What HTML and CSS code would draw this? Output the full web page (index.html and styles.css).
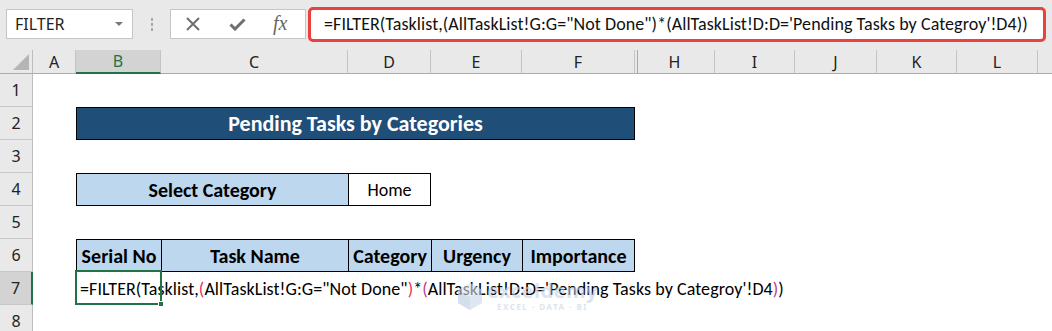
FILE: index.html
```html
<!DOCTYPE html>
<html>
<head>
<meta charset="utf-8">
<link rel="stylesheet" href="styles.css">
</head>
<body>
<div class="toolbar">
  <div class="namebox"><span>FILTER</span><span class="caret"></span></div>
  <div class="grip"><i></i><i></i><i></i></div>
  <div class="fbtns">
    <svg class="ic-x" width="14" height="14" viewBox="0 0 14 14"><path d="M1 1 L13 13 M13 1 L1 13" stroke="#6f6f6f" stroke-width="2" fill="none"/></svg>
    <svg class="ic-check" width="17" height="13" viewBox="0 0 17 13"><path d="M1.5 6.5 L6 11 L15.5 1.5" stroke="#6f6f6f" stroke-width="3" fill="none"/></svg>
    <span class="fx">fx</span>
  </div>
  <div class="formula">=FILTER(Tasklist,(AllTaskList!G:G="Not Done")*(AllTaskList!D:D='Pending Tasks by Categroy'!D4))</div>
</div>
<div class="sheet">
  <div class="corner"><span class="tri"></span></div>
  <div class="ch">A</div>
  <div class="ch sel">B</div>
  <div class="ch">C</div>
  <div class="ch">D</div>
  <div class="ch">E</div>
  <div class="ch">F</div>
  <div class="ch hid">H</div>
  <div class="ch">I</div>
  <div class="ch">J</div>
  <div class="ch">K</div>
  <div class="ch">L</div>
  <div class="ch last"></div>

  <div class="rh">1</div>

  <div class="rh">2</div>
  <div class="title">Pending Tasks by Categories</div>

  <div class="rh">3</div>

  <div class="rh">4</div>
  <div class="select-row">
    <div class="cell head">Select Category</div>
    <div class="cell">Home</div>
  </div>

  <div class="rh">5</div>

  <div class="rh">6</div>
  <div class="table-head">
    <div class="cell head">Serial No</div>
    <div class="cell head">Task Name</div>
    <div class="cell head">Category</div>
    <div class="cell head">Urgency</div>
    <div class="cell head">Importance</div>
  </div>

  <div class="rh sel">7</div>
  <div class="edit-row">
    <span class="edit-text">=FILTER(Tasklist,<span class="p1">(</span>AllTaskList!G:G="Not Done"<span class="p1">)</span>*<span class="p2">(</span>AllTaskList!D:D='Pending Tasks by Categroy'!D4<span class="p2">)</span>)</span>
    <span class="selbox"><span class="handle"></span></span>
    <div class="watermark">
      <svg width="30" height="30" viewBox="0 0 30 30"><path d="M15 2 L27 9 L27 22 L15 29 L3 22 L3 9 Z" fill="#c9d6ea"/><path d="M15 2 L27 9 L15 16 L3 9 Z" fill="#dbe4f2"/><path d="M15 16 L15 29 L3 22 L3 9 Z" fill="#b9c9e2"/></svg>
      <div class="wm-text">
        <span class="wm-name">exceldemy</span>
        <span class="wm-sub">EXCEL · DATA · BI</span>
      </div>
    </div>
  </div>

  <div class="rh">8</div>
</div>
</body>
</html>
```

FILE: styles.css
```css
* { box-sizing: border-box; }
html, body { margin: 0; padding: 0; }
body {
  width: 1052px;
  height: 331px;
  overflow: hidden;
  background: #fff;
  font-family: "Noto Sans", sans-serif;
}

/* ---------- formula toolbar ---------- */
.toolbar {
  height: 50px;
  background: #e9e9e9;
  display: flex;
  align-items: center;
  padding: 0 6px 2px 6px;
}
.namebox {
  width: 127px;
  height: 30px;
  background: #fff;
  border: 1px solid #c6c6c6;
  display: flex;
  align-items: center;
  justify-content: space-between;
  padding: 0 9px 0 8px;
  font-size: 16px;
  color: #222;
}
.caret {
  width: 0;
  height: 0;
  border-left: 4px solid transparent;
  border-right: 4px solid transparent;
  border-top: 4px solid #7a7a7a;
}
.grip {
  width: 37px;
  display: flex;
  flex-direction: column;
  align-items: center;
  gap: 2px;
}
.grip i {
  display: block;
  width: 2px;
  height: 3px;
  background: #a8a8a8;
}
.fbtns {
  width: 136px;
  height: 30px;
  background: #fff;
  border: 1px solid #c6c6c6;
  display: flex;
  align-items: center;
  padding-left: 15px;
}
.ic-check { margin-left: 29px; }
.fx {
  margin-left: 27px;
  font-family: "Liberation Serif", serif;
  font-style: italic;
  font-size: 20px;
  color: #666;
  line-height: 1;
  margin-top: -2px;
}
.formula {
  flex: 1;
  margin-left: 2px;
  height: 35px;
  border: 3px solid #e8413e;
  border-radius: 5px;
  background: #fff;
  padding-left: 13px;
  display: flex;
  align-items: center;
  font-family: Carlito, Calibri, Lato, sans-serif;
  font-size: 18px;
  letter-spacing: 0.07px;
  color: #111;
  white-space: nowrap;
  overflow: hidden;
}

/* ---------- sheet grid ---------- */
.sheet {
  display: grid;
  grid-template-columns: 33px 43px 85px 187px 83px 91px 113px 80px 80px 82px 80px 81px 1fr;
  grid-template-rows: 24px repeat(8, 33px);
  font-family: Carlito, Calibri, Lato, sans-serif;
}
.corner {
  background: #e9e9e9;
  border-right: 1px solid #bdbdbd;
  border-bottom: 1px solid #ababab;
  position: relative;
}
.tri {
  position: absolute;
  right: 3px;
  bottom: 3px;
  width: 0;
  height: 0;
  border-left: 16px solid transparent;
  border-bottom: 16px solid #b5b5b5;
}
.ch {
  background: #e9e9e9;
  border-right: 1px solid #c4c4c4;
  border-bottom: 1px solid #ababab;
  display: flex;
  align-items: center;
  justify-content: center;
  font-family: "Noto Sans", sans-serif;
  font-size: 16px;
  color: #222;
}
.ch.sel {
  background: #d3d3d3;
  color: #217346;
  border-bottom: 2px solid #217346;
}
.ch.hid { box-shadow: inset 2px 0 0 #e9e9e9, inset 3px 0 0 #a9a9a9; }
.ch.last { border-right: none; }

.rh {
  grid-column: 1;
  background: #e9e9e9;
  border-right: 1px solid #bdbdbd;
  border-bottom: 1px solid #c8c8c8;
  display: flex;
  align-items: center;
  justify-content: center;
  font-family: "Noto Sans", sans-serif;
  font-size: 16px;
  color: #222;
}
.rh.sel {
  background: #d3d3d3;
  border-right: 2px solid #217346;
}

.title {
  grid-column: 3 / 8;
  background: #1f4e78;
  border: 1px solid #000;
  color: #fff;
  font-weight: bold;
  font-size: 22px;
  display: flex;
  align-items: center;
  justify-content: center;
}

.select-row,
.table-head {
  display: grid;
  gap: 1px;
  padding: 1px;
  background: #000;
}
.select-row {
  grid-column: 3 / 6;
  grid-template-columns: 271px 81px;
}
.table-head {
  grid-column: 3 / 8;
  grid-template-columns: 84px 186px 82px 90px 111px;
}
.cell {
  background: #fff;
  display: flex;
  align-items: center;
  justify-content: center;
  font-size: 18px;
  color: #000;
  white-space: nowrap;
}
.cell.head {
  background: #bdd7ee;
  font-weight: bold;
  font-size: 20px;
}

.edit-row {
  grid-column: 3 / -1;
  position: relative;
  display: flex;
  align-items: center;
  padding-left: 4px;
  font-size: 18px;
  letter-spacing: 0.07px;
  color: #000;
  white-space: nowrap;
}
.p1 { color: #e8305a; }
.p2 { color: #c03aa0; }
.selbox {
  position: absolute;
  left: -1px;
  top: -2px;
  width: 87px;
  height: 35px;
  border: 2px solid #217346;
}
.handle {
  position: absolute;
  right: -4px;
  bottom: -4px;
  width: 6px;
  height: 6px;
  background: #217346;
  border: 1px solid #fff;
}
.watermark {
  position: absolute;
  left: 379px;
  top: 9px;
  display: flex;
  align-items: center;
  gap: 2px;
  opacity: 0.6;
  pointer-events: none;
}
.wm-text {
  display: flex;
  flex-direction: column;
  align-items: center;
  line-height: 1;
}
.wm-name {
  font-family: "Noto Sans", sans-serif;
  font-size: 20px;
  font-weight: bold;
  color: #c5d2e6;
  letter-spacing: 0.5px;
}
.wm-sub {
  font-family: "Noto Sans", sans-serif;
  font-size: 8px;
  font-weight: bold;
  color: #c9d3e3;
  letter-spacing: 1.5px;
  margin-top: 2px;
}
```
